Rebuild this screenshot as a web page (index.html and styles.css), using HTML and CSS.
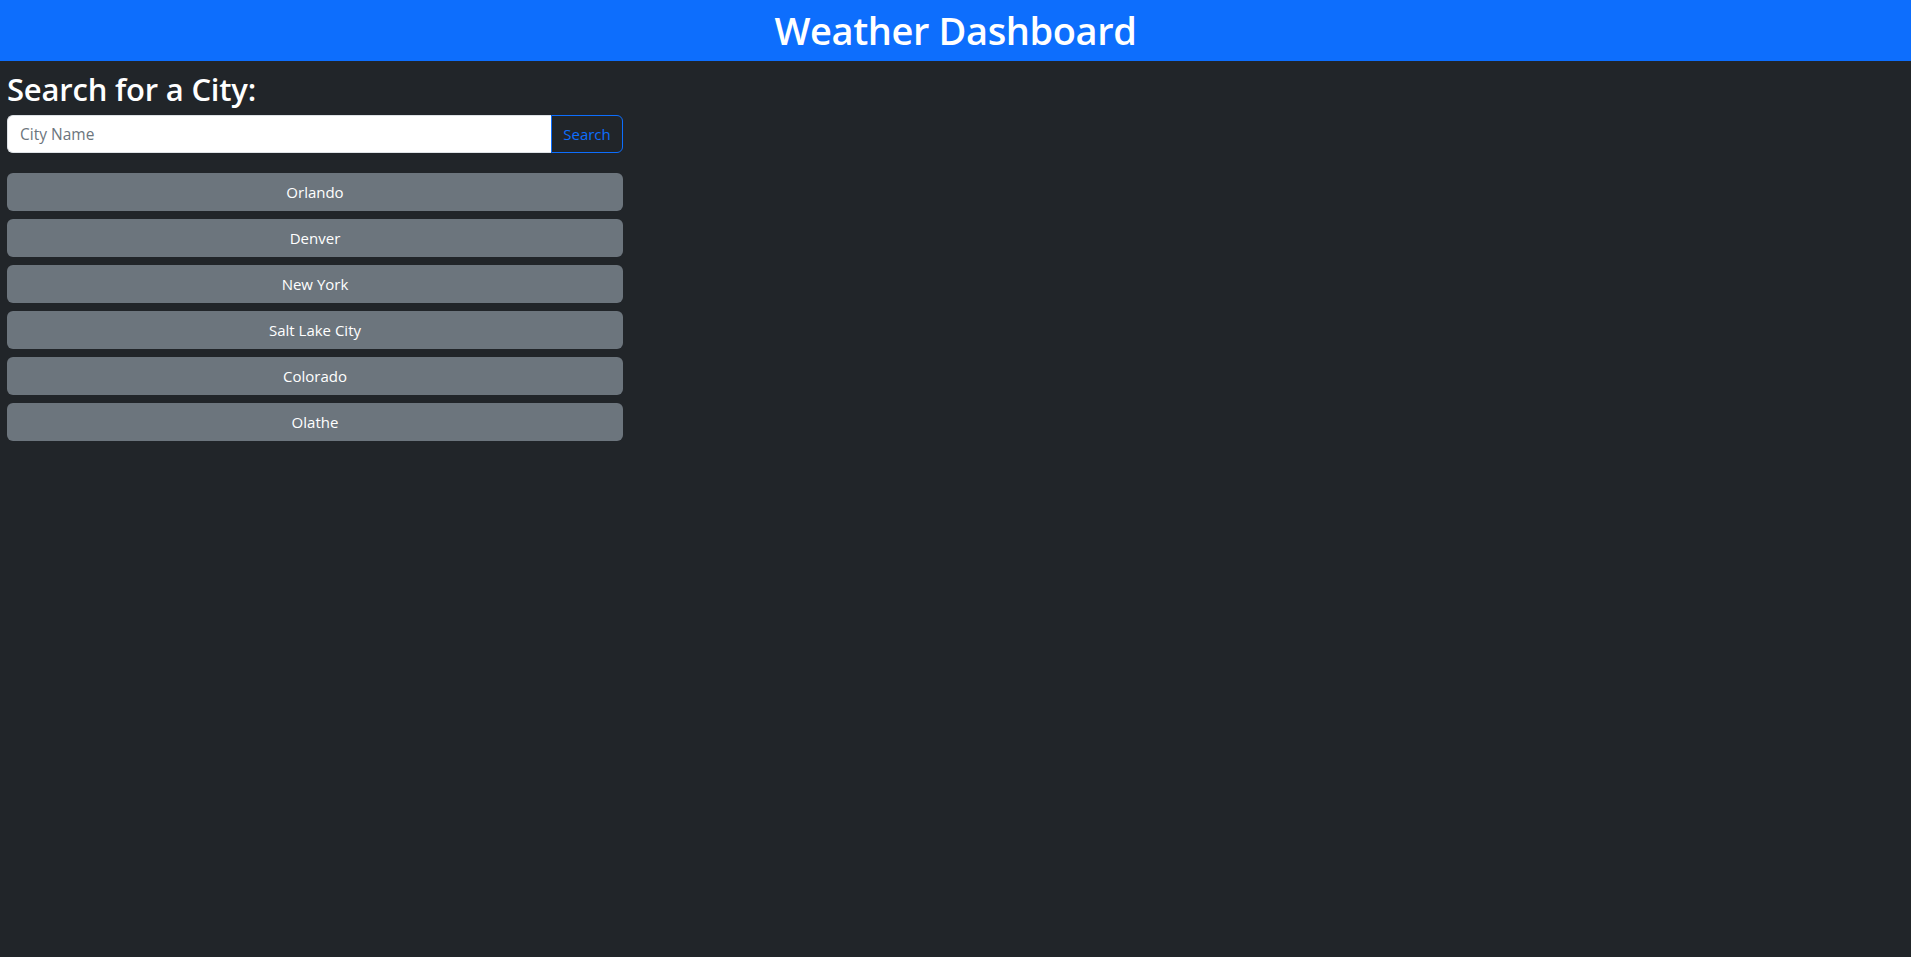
FILE: index.html
```html
<!DOCTYPE html>
<html lang="en">
<head>
<meta charset="utf-8">
<title>Weather Dashboard</title>
<link rel="stylesheet" href="styles.css">
</head>
<body>
<header class="topbar">
  <h1 class="topbar-title">Weather Dashboard</h1>
</header>
<main class="layout">
  <section class="sidebar">
    <h2 class="search-title">Search for a City:</h2>
    <form class="input-group" onsubmit="return false;">
      <input class="city-input" type="text" placeholder="City Name">
      <button class="search-btn" type="submit">Search</button>
    </form>
    <div class="history">
      <button class="history-btn" type="button">Orlando</button>
      <button class="history-btn" type="button">Denver</button>
      <button class="history-btn" type="button">New York</button>
      <button class="history-btn" type="button">Salt Lake City</button>
      <button class="history-btn" type="button">Colorado</button>
      <button class="history-btn" type="button">Olathe</button>
    </div>
  </section>
</main>
</body>
</html>
```

FILE: styles.css
```css
* {
  box-sizing: border-box;
}

html, body {
  margin: 0;
  padding: 0;
  min-height: 100%;
}

body {
  background: #212529;
  color: #ffffff;
  font-family: "Open Sans", "Noto Sans", "Liberation Sans", sans-serif;
  font-size: 16px;
  line-height: 1.5;
  min-height: 957px;
}

.topbar {
  background: #0d6efd;
  height: 61px;
  display: flex;
  align-items: center;
  justify-content: center;
}

.topbar-title {
  margin: 0;
  font-size: 38px;
  font-weight: 600;
  line-height: 1.2;
  color: #ffffff;
  letter-spacing: -0.4px;
}

.layout {
  padding: 9px 0 0 7px;
}

.sidebar {
  width: 616px;
  display: flex;
  flex-direction: column;
}

.search-title {
  margin: 0 0 7px;
  font-size: 31px;
  font-weight: 600;
  line-height: 38px;
  letter-spacing: -0.2px;
}

.input-group {
  display: flex;
  height: 38px;
  margin: 0 0 20px;
}

.city-input {
  flex: 1;
  min-width: 0;
  height: 38px;
  border: 1px solid #dee2e6;
  border-right: none;
  border-radius: 6px 0 0 6px;
  background: #ffffff;
  padding: 0 12px;
  font-family: inherit;
  font-size: 15.5px;
  color: #212529;
  outline: none;
}

.city-input::placeholder {
  color: #6c757d;
}

.search-btn {
  width: 72px;
  height: 38px;
  border: 1px solid #0d6efd;
  border-radius: 0 6px 6px 0;
  background: transparent;
  color: #0d6efd;
  font-family: inherit;
  font-size: 15px;
  padding: 0;
  cursor: pointer;
}

.history {
  display: flex;
  flex-direction: column;
  gap: 8px;
}

.history-btn {
  height: 38px;
  border: none;
  border-radius: 6px;
  background: #6c757d;
  color: #ffffff;
  font-family: inherit;
  font-size: 15px;
  padding: 0;
  cursor: pointer;
}
```
